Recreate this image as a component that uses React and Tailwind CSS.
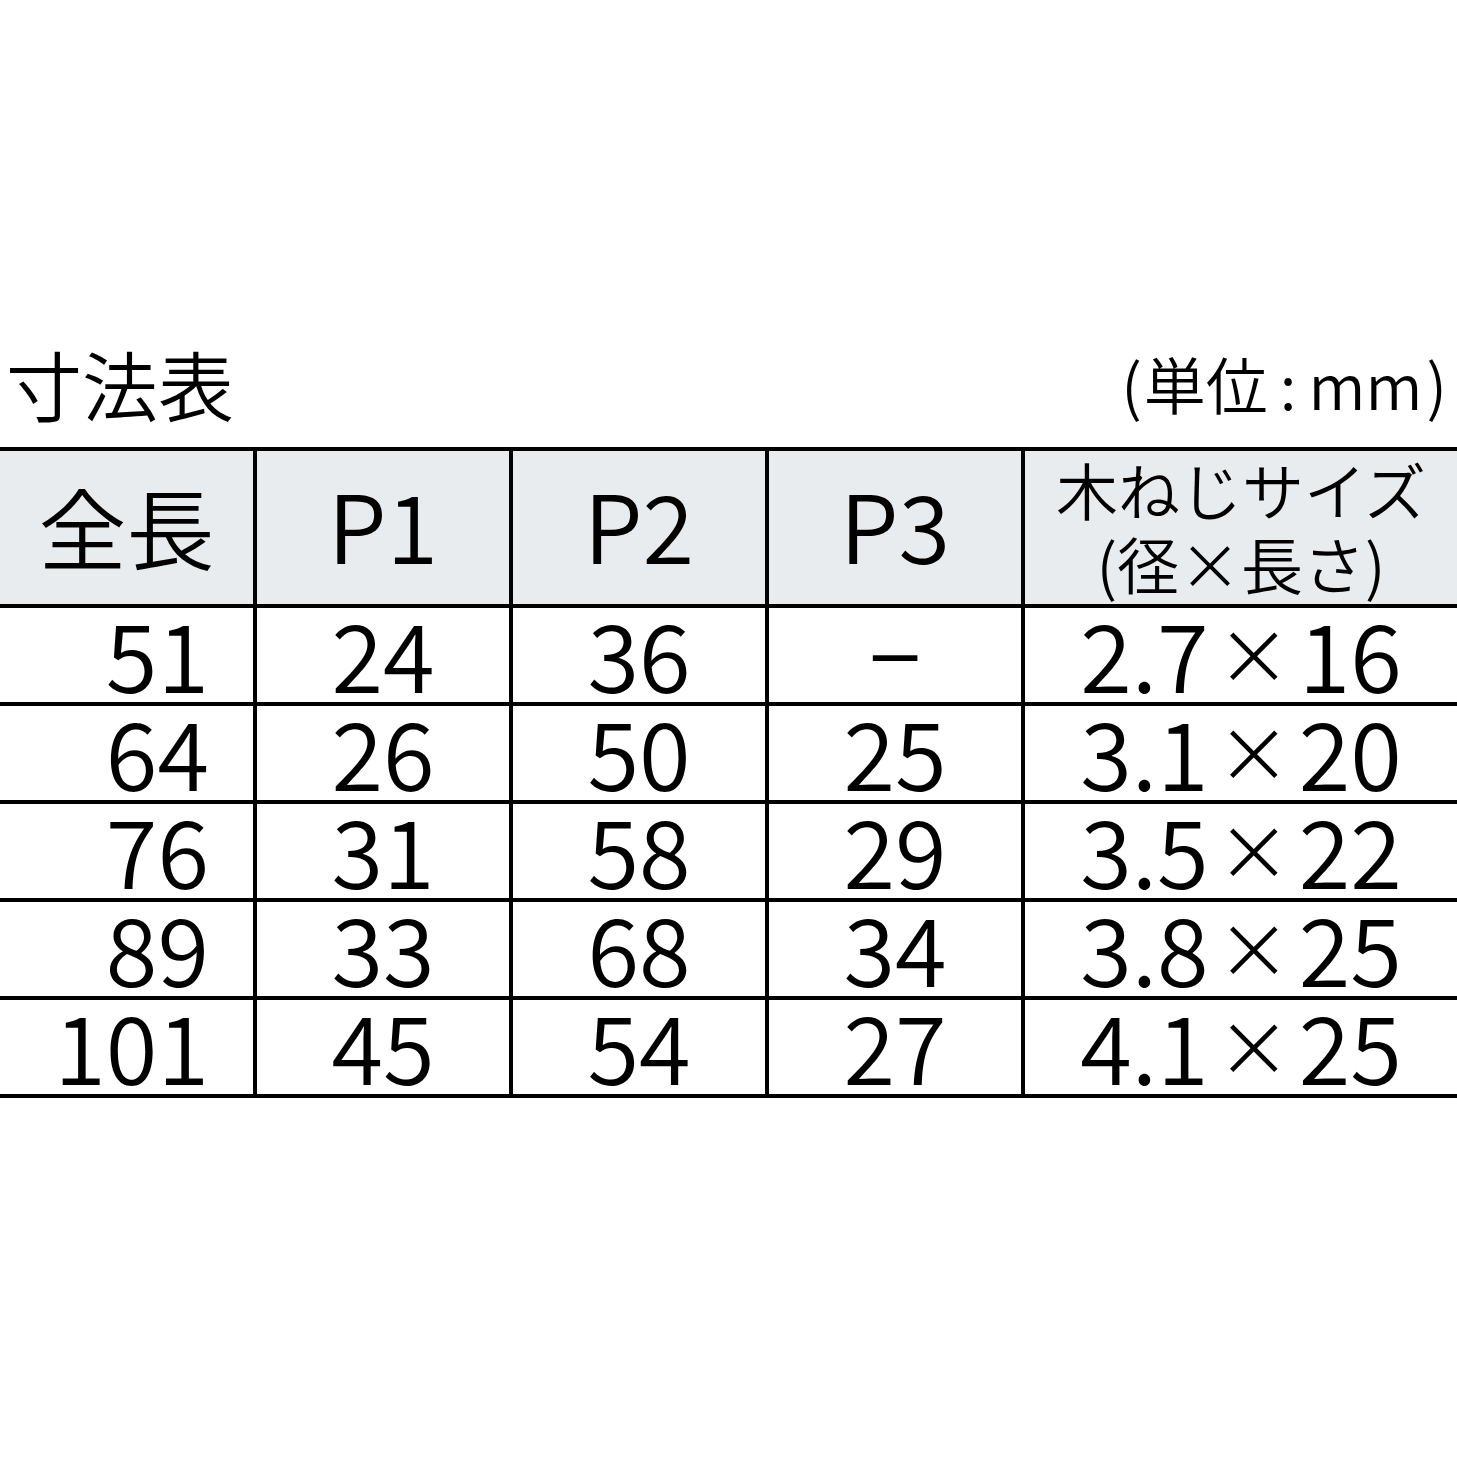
const FONT = '"Noto Sans CJK JP", "Noto Sans", sans-serif';

const rows = [
  ['51', '24', '36', '−', ['2.7', '16']],
  ['64', '26', '50', '25', ['3.1', '20']],
  ['76', '31', '58', '29', ['3.5', '22']],
  ['89', '33', '68', '34', ['3.8', '25']],
  ['101', '45', '54', '27', ['4.1', '25']],
];

const grid = 'grid grid-cols-[257px_256px_256px_256px_1fr]';
const cell = 'flex items-center justify-center border-r-4 border-black';

export default function App() {
  return (
    <div className="h-[1457px] w-[1457px] bg-white pt-[338px] font-[350] text-black" style={{ fontFamily: FONT }}>
      {/* title + unit */}
      <div className="flex items-center justify-between pl-[6px] pr-[10px]">
        <div className="text-[76px] leading-[90px]">寸法表</div>
        <div className="flex items-center text-[62px] leading-[90px]">
          <span>(</span>
          <span className="ml-[2px]">単位</span>
          <span className="mx-[12px]">:</span>
          <span>mm</span>
          <span className="ml-[4px]">)</span>
        </div>
      </div>

      <div className="mt-[19px] border-t-4 border-black">
        {/* header */}
        <div className={`${grid} h-[157px] border-b-4 border-black bg-[#e9ecef]`}>
          <div className={`${cell} pb-[6px] text-[88px]`}>全長</div>
          <div className={`${cell} pb-[8px] text-[94px]`}>P1</div>
          <div className={`${cell} pb-[8px] text-[94px]`}>P2</div>
          <div className={`${cell} pb-[8px] text-[94px]`}>P3</div>
          <div className="flex flex-col items-center justify-center pb-[4px] text-[62px] leading-[74px]">
            <span>木ねじサイズ</span>
            <span>(径×長さ)</span>
          </div>
        </div>

        {rows.map((r, i) => (
          <div key={i} className={`${grid} h-[98px] border-b-4 border-black text-[94px] leading-[86px]`}>
            <div className="flex items-center justify-end border-r-4 border-black pb-[6px] pr-[44px]">{r[0]}</div>
            <div className={`${cell} pb-[6px]`}>{r[1]}</div>
            <div className={`${cell} pb-[6px]`}>{r[2]}</div>
            <div className={`${cell} pb-[6px]`}>{r[3]}</div>
            <div className="flex items-center justify-center pb-[6px]">
              <span>{r[4][0]}</span>
              <span className="mx-[8px] text-[74px]">×</span>
              <span>{r[4][1]}</span>
            </div>
          </div>
        ))}
      </div>
    </div>
  );
}
